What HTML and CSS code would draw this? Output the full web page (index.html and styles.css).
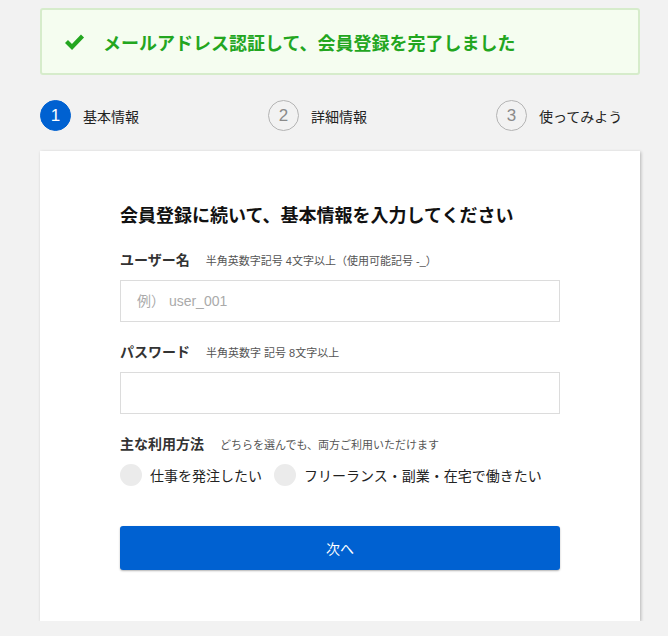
FILE: index.html
```html
<!DOCTYPE html>
<html>
<head>
  <meta charset="UTF-8">
  <title>会員登録</title>
  <link rel="stylesheet" href="styles.css">
</head>
<body>
  <div class="page">
    <div class="alert">
      <svg class="alert-icon" width="21" height="17" viewBox="0 0 21 17">
        <polyline points="2.5,8.5 8,14 18.5,3" fill="none" stroke="#23a61f" stroke-width="4.2"/>
      </svg>
      <span>メールアドレス認証して、会員登録を完了しました</span>
    </div>

    <div class="steps">
      <div class="step active"><span class="step-num">1</span>基本情報</div>
      <div class="step"><span class="step-num">2</span>詳細情報</div>
      <div class="step"><span class="step-num">3</span>使ってみよう</div>
    </div>

    <main class="card">
      <h2>会員登録に続いて、基本情報を入力してください</h2>
      <form>
        <div class="field-label">ユーザー名<span class="hint">半角英数字記号 4文字以上（使用可能記号 -_）</span></div>
        <input type="text" class="text-input" placeholder="例） user_001">

        <div class="field-label">パスワード<span class="hint">半角英数字 記号 8文字以上</span></div>
        <input type="password" class="text-input">

        <div class="field-label">主な利用方法<span class="hint">どちらを選んでも、両方ご利用いただけます</span></div>
        <div class="radio-group">
          <label class="radio"><span class="radio-dot"></span>仕事を発注したい</label>
          <label class="radio"><span class="radio-dot"></span>フリーランス・副業・在宅で働きたい</label>
        </div>

        <button type="button" class="next-btn">次へ</button>
      </form>
    </main>
  </div>
</body>
</html>
```

FILE: styles.css
```css
body {
  margin: 0;
  padding: 0;
  background: #f2f2f2;
  font-family: "Liberation Sans", "Noto Sans CJK JP", sans-serif;
  color: #333;
}
.page {
  width: 600px;
  margin-left: 40px;
  padding-top: 8px;
}
.alert {
  display: flex;
  align-items: center;
  height: 63px;
  padding: 0 22px;
  background: #f5fdf0;
  border: 2px solid #d6eccb;
  border-radius: 3px;
  color: #23a61f;
  font-size: 18px;
  font-weight: bold;
}
.alert-icon {
  margin-right: 18px;
}
.steps {
  display: flex;
  margin-top: 25px;
}
.step {
  display: flex;
  align-items: center;
  width: 228px;
  font-size: 14px;
  color: #222;
}
.step:last-child {
  width: auto;
}
.step-num {
  display: flex;
  align-items: center;
  justify-content: center;
  width: 29px;
  height: 29px;
  margin-right: 12px;
  border: 1.5px solid #b4b4b4;
  border-radius: 50%;
  color: #8a8a8a;
  font-size: 17px;
}
.step.active .step-num {
  background: #0061d1;
  border-color: #0061d1;
  color: #fff;
}
.card {
  margin-top: 20px;
  padding: 53px 80px 51px;
  background: #fff;
  box-shadow: 1px 1px 3px rgba(0,0,0,0.25);
}
h2 {
  margin: 0;
  font-size: 18px;
  line-height: 25px;
  font-weight: bold;
  color: #111;
}
.field-label {
  margin-top: 20px;
  font-size: 14px;
  line-height: 20px;
  font-weight: bold;
  color: #333;
}
h2 + form .field-label:first-child {
  margin-top: 21px;
}
.hint {
  margin-left: 16px;
  font-size: 11px;
  font-weight: normal;
  color: #555;
}
.text-input {
  display: block;
  box-sizing: border-box;
  width: 440px;
  height: 42px;
  margin-top: 9px;
  padding: 0 16px;
  border: 1px solid #dcdcdc;
  font-family: inherit;
  font-size: 14px;
  color: #333;
  outline: none;
}
.text-input::placeholder {
  color: #aaa;
}
.radio-group {
  display: flex;
  margin-top: 9px;
}
.radio {
  display: flex;
  align-items: center;
  margin-right: 12px;
  font-size: 14px;
  color: #222;
}
.radio-dot {
  width: 22px;
  height: 22px;
  margin-right: 8px;
  border-radius: 50%;
  background: #ebebeb;
}
.next-btn {
  display: block;
  width: 440px;
  height: 44px;
  margin-top: 40px;
  border: none;
  border-radius: 3px;
  background: #0061d1;
  color: #fff;
  font-family: inherit;
  font-size: 14px;
  box-shadow: 0 1px 2px rgba(0,0,0,0.3);
  cursor: pointer;
}
```
